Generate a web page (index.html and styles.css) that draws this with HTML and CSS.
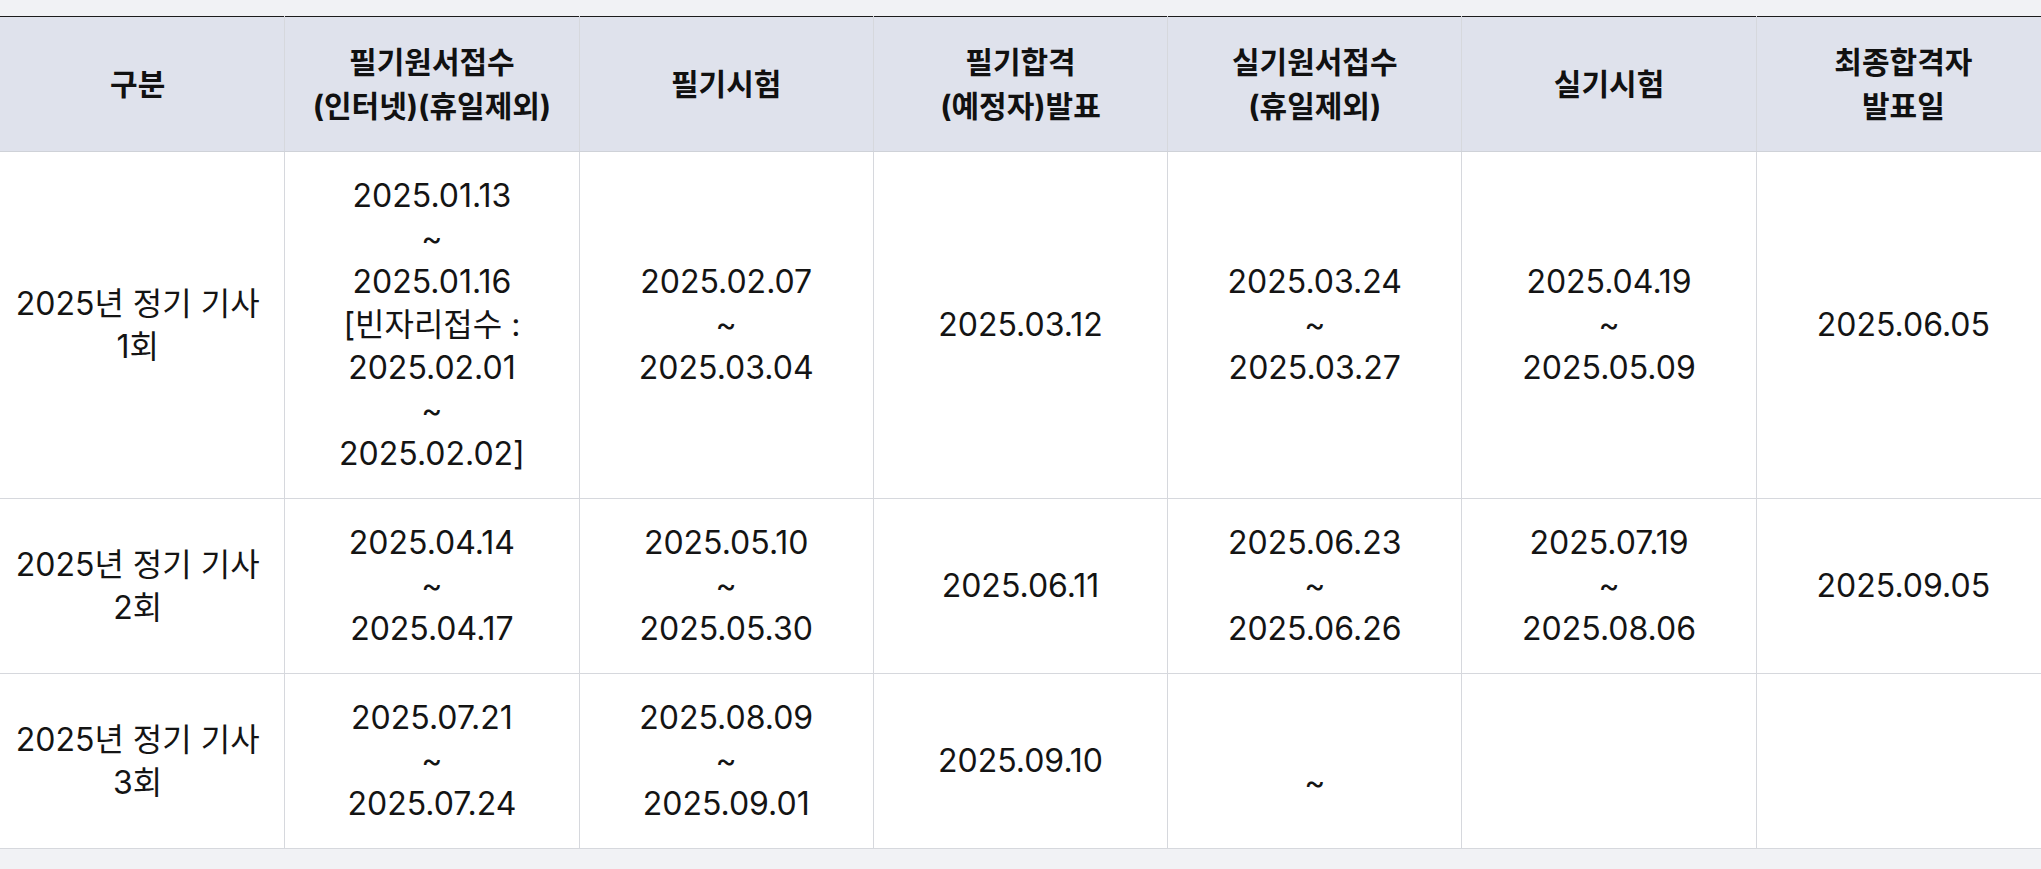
FILE: index.html
```html
<!DOCTYPE html>
<html lang="ko">
<head>
<meta charset="utf-8">
<title>2025년 정기 기사 시험일정</title>
<link rel="stylesheet" href="styles.css">
</head>
<body>
<div class="wrap">
<table class="schedule">
<thead>
<tr>
<th>구분</th>
<th>필기원서접수<br>(인터넷)(휴일제외)</th>
<th>필기시험</th>
<th>필기합격<br>(예정자)발표</th>
<th>실기원서접수<br>(휴일제외)</th>
<th>실기시험</th>
<th>최종합격자<br>발표일</th>
</tr>
</thead>
<tbody>
<tr>
<td>2025년 정기 기사<br>1회</td>
<td>2025.01.13<br>~<br>2025.01.16<br>[빈자리접수 :<br>2025.02.01<br>~<br>2025.02.02]</td>
<td>2025.02.07<br>~<br>2025.03.04</td>
<td>2025.03.12</td>
<td>2025.03.24<br>~<br>2025.03.27</td>
<td>2025.04.19<br>~<br>2025.05.09</td>
<td>2025.06.05</td>
</tr>
<tr>
<td>2025년 정기 기사<br>2회</td>
<td>2025.04.14<br>~<br>2025.04.17</td>
<td>2025.05.10<br>~<br>2025.05.30</td>
<td>2025.06.11</td>
<td>2025.06.23<br>~<br>2025.06.26</td>
<td>2025.07.19<br>~<br>2025.08.06</td>
<td>2025.09.05</td>
</tr>
<tr>
<td>2025년 정기 기사<br>3회</td>
<td>2025.07.21<br>~<br>2025.07.24</td>
<td>2025.08.09<br>~<br>2025.09.01</td>
<td>2025.09.10</td>
<td><br>~</td>
<td></td>
<td></td>
</tr>
</tbody>
</table>
</div>
</body>
</html>
```

FILE: styles.css
```css
html, body {
  margin: 0;
  padding: 0;
  overflow: hidden;
}
body {
  background: #f1f2f5;
  font-family: "Inter", "Noto Sans CJK KR", sans-serif;
  color: #111;
  padding-top: 16px;
}
.wrap {
  margin: 0 -10px;
}
.schedule {
  width: 100%;
  table-layout: fixed;
  border-collapse: collapse;
  border-top: 1px solid #1c1c1c;
  background: #fff;
}
.schedule th,
.schedule td {
  border: 1px solid #d6d8dd;
  text-align: center;
  vertical-align: middle;
  line-height: 43px;
  padding: 22px 10px 23px;
}
.schedule th {
  background: #dfe2ec;
  font-size: 30px;
  line-height: 44px;
  font-weight: 700;
  color: #111;
  padding: 23px 10px;
  border-top: none;
  border-bottom: 1px solid #cfd2d8;
}
.schedule td {
  font-size: 32px;
  font-weight: 400;
  color: #141414;
}
```
